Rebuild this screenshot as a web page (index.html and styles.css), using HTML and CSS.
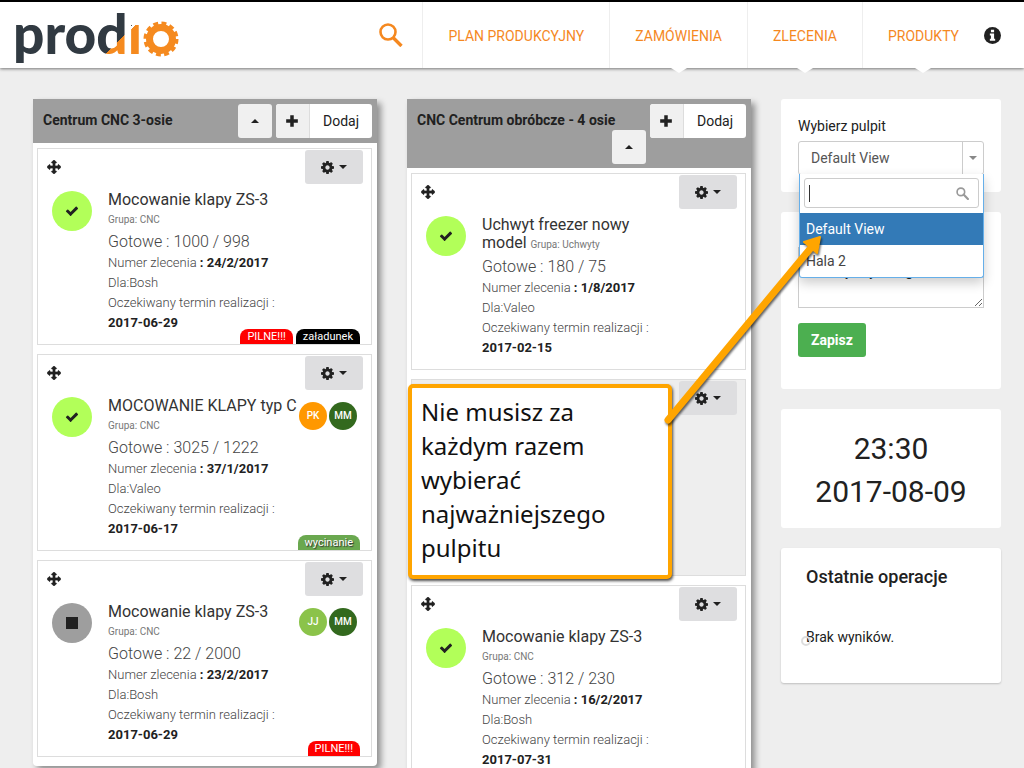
FILE: index.html
```html
<!DOCTYPE html>
<html lang="pl">
<head>
    <meta charset="UTF-8">
    <meta name="viewport" content="width=device-width, initial-scale=1.0">
    <title>Prodio - pulpit</title>
    <link rel="stylesheet" href="styles.css">
</head>
<body>
    <!-- Icons -->
    <svg class="sprite" aria-hidden="true">
        <symbol id="i-move" viewBox="0 0 1792 1792"><path stroke="currentColor" stroke-width="90" d="M1792 896q0 26-19 45l-256 256q-19 19-45 19t-45-19-19-45v-128h-384v384h128q26 0 45 19t19 45-19 45l-256 256q-19 19-45 19t-45-19l-256-256q-19-19-19-45t19-45 45-19h128v-384h-384v128q0 26-19 45t-45 19-45-19l-256-256q-19-19-19-45t19-45l256-256q19-19 45-19t45 19 19 45v128h384v-384h-128q-26 0-45-19t-19-45 19-45l256-256q19-19 45-19t45 19l256 256q19 19 19 45t-19 45-45 19h-128v384h384v-128q0-26 19-45t45-19 45 19l256 256q19 19 19 45z"/></symbol>
        <symbol id="i-cog" viewBox="128 128 1536 1536"><path d="M1152 896q0-106-75-181t-181-75-181 75-75 181 75 181 181 75 181-75 75-181zm512-109v222q0 12-8 23t-20 13l-185 28q-19 54-39 91 35 50 107 138 10 12 10 25t-9 23q-27 37-99 108t-94 71q-12 0-26-9l-138-108q-44 23-91 38-16 136-29 186-7 28-36 28h-222q-14 0-24.500-8.500t-11.500-21.500l-28-184q-49-16-90-37l-141 107q-10 9-25 9-14 0-25-11-126-114-165-168-7-10-7-23 0-12 8-23 15-21 51-66.500t54-70.500q-27-50-41-99l-183-27q-13-2-21-12.500t-8-23.500v-222q0-12 8-23t19-13l186-28q14-46 39-92-40-57-107-138-10-12-10-24 0-10 9-23 26-36 98.500-107.500t94.500-71.500q13 0 26 10l138 107q44-23 91-38 16-136 29-186 7-28 36-28h222q14 0 24.500 8.500t11.500 21.500l28 184q49 16 90 37l142-107q9-9 24-9 13 0 25 10 129 119 165 170 7 8 7 22 0 12-8 23-15 21-51 66.500t-54 70.500q26 50 41 98l183 28q13 2 21 12.500t8 23.500z"/></symbol>
        <symbol id="i-check" viewBox="0 0 1792 1792"><path d="M1671 566q0 40-28 68l-724 724-136 136q-28 28-68 28t-68-28l-136-136-362-362q-28-28-28-68t28-68l136-136q28-28 68-28t68 28l294 295 656-657q28-28 68-28t68 28l136 136q28 28 28 68z"/></symbol>
        <symbol id="i-stop" viewBox="0 0 14 14"><rect x="1" y="1" width="12" height="12"/></symbol>
        <symbol id="i-plus" viewBox="0 0 12 12"><path d="M4.500 1h3v3.500H11v3H7.500V11h-3V7.500H1v-3h3.500z"/></symbol>
        <symbol id="i-up" viewBox="0 0 8 4"><path d="M0 4l4-4 4 4z"/></symbol>
        <symbol id="i-down" viewBox="0 0 8 4"><path d="M0 0l4 4 4-4z"/></symbol>
        <symbol id="i-search" viewBox="0 0 24 24"><circle cx="9" cy="9" r="7" fill="none" stroke="currentColor" stroke-width="3"/><path d="M14 14l8 8" stroke="currentColor" stroke-width="4" stroke-linecap="round"/></symbol>
        <symbol id="i-search-thin" viewBox="0 0 24 24"><circle cx="9" cy="9" r="7.500" fill="none" stroke="currentColor" stroke-width="2.600"/><path d="M14 14.500l8.500 8.500" stroke="currentColor" stroke-width="3.400"/></symbol>
        <symbol id="i-info" viewBox="0 0 16 16"><circle cx="8" cy="8" r="8"/><path fill="#fff" d="M6.500 2.500h3V5h-3zM5.500 6h4v5h1v2h-5v-2h1V8h-1z"/></symbol>
    </svg>

    <header class="navbar">
        <a class="logo" href="#" aria-label="prodio">
            <svg width="166" height="54" viewBox="0 0 166 54">
                <defs>
                    <linearGradient id="d-fill" gradientUnits="userSpaceOnUse" x1="92" y1="22" x2="108" y2="38">
                        <stop offset="60%" stop-color="#313a42"/>
                        <stop offset="60%" stop-color="#f58a1f"/>
                    </linearGradient>
                    <linearGradient id="i-fill" gradientUnits="userSpaceOnUse" x1="116" y1="11" x2="123" y2="18">
                        <stop offset="30%" stop-color="#313a42"/>
                        <stop offset="30%" stop-color="#fff"/>
                        <stop offset="55%" stop-color="#fff"/>
                        <stop offset="55%" stop-color="#f58a1f"/>
                    </linearGradient>
                </defs>
                <text x="-1" y="42" class="logo-text">pro<tspan fill="url(#d-fill)">d</tspan><tspan fill="url(#i-fill)">ı</tspan></text>
                <circle cx="147" cy="27" r="11.500" fill="none" stroke="#f58a1f" stroke-width="7"/>
                <circle cx="147" cy="27" r="15.500" fill="none" stroke="#f58a1f" stroke-width="4" stroke-dasharray="4.800 3.316"/>
            </svg>
        </a>
        <a class="search" href="#" aria-label="Szukaj"><svg class="icon"><use href="#i-search-thin"/></svg></a>
        <nav class="menu">
            <a href="#">PLAN PRODUKCYJNY</a>
            <a href="#" class="has-sub">ZAMÓWIENIA</a>
            <a href="#" class="has-sub">ZLECENIA</a>
            <a href="#" class="has-sub">PRODUKTY</a>
        </nav>
        <a class="info-link" href="#" aria-label="Informacje"><svg class="icon"><use href="#i-info"/></svg></a>
    </header>

    <main class="board">
        <section class="column">
            <div class="column-head">
                <div class="column-title">
                    <h2>Centrum CNC 3-osie</h2>
                    <button class="btn-up" aria-label="Zwiń"><svg class="caret"><use href="#i-up"/></svg></button>
                </div>
                <button class="btn-add"><span class="plus"><svg class="icon"><use href="#i-plus"/></svg></span><span class="add-text">Dodaj</span></button>
            </div>
            <div class="column-body">
                <article class="card">
                    <div class="card-top">
                        <svg class="icon move"><use href="#i-move"/></svg>
                        <button class="btn-gear" aria-label="Opcje"><svg class="icon"><use href="#i-cog"/></svg><svg class="caret"><use href="#i-down"/></svg></button>
                    </div>
                    <div class="card-main">
                        <span class="status done"><svg class="icon"><use href="#i-check"/></svg></span>
                        <div class="details">
                            <h3>Mocowanie klapy ZS-3 <small>Grupa: CNC</small></h3>
                            <p class="ready">Gotowe : 1000 / 998</p>
                            <p>Numer zlecenia <b>: 24/2/2017</b></p>
                            <p>Dla:Bosh</p>
                            <p>Oczekiwany termin realizacji : <b>2017-06-29</b></p>
                        </div>
                        <div class="people"></div>
                    </div>
                    <div class="tags"><span class="tag red">PILNE!!!</span><span class="tag black">załadunek</span></div>
                </article>
                <article class="card">
                    <div class="card-top">
                        <svg class="icon move"><use href="#i-move"/></svg>
                        <button class="btn-gear" aria-label="Opcje"><svg class="icon"><use href="#i-cog"/></svg><svg class="caret"><use href="#i-down"/></svg></button>
                    </div>
                    <div class="card-main">
                        <span class="status done"><svg class="icon"><use href="#i-check"/></svg></span>
                        <div class="details">
                            <h3>MOCOWANIE KLAPY typ C <small>Grupa: CNC</small></h3>
                            <p class="ready">Gotowe : 3025 / 1222</p>
                            <p>Numer zlecenia <b>: 37/1/2017</b></p>
                            <p>Dla:Valeo</p>
                            <p>Oczekiwany termin realizacji : <b>2017-06-17</b></p>
                        </div>
                        <div class="people"><span class="avatar orange">PK</span><span class="avatar dark">MM</span></div>
                    </div>
                    <div class="tags"><span class="tag green">wycinanie</span></div>
                </article>
                <article class="card">
                    <div class="card-top">
                        <svg class="icon move"><use href="#i-move"/></svg>
                        <button class="btn-gear" aria-label="Opcje"><svg class="icon"><use href="#i-cog"/></svg><svg class="caret"><use href="#i-down"/></svg></button>
                    </div>
                    <div class="card-main">
                        <span class="status stopped"><svg class="icon"><use href="#i-stop"/></svg></span>
                        <div class="details">
                            <h3>Mocowanie klapy ZS-3 <small>Grupa: CNC</small></h3>
                            <p class="ready">Gotowe : 22 / 2000</p>
                            <p>Numer zlecenia <b>: 23/2/2017</b></p>
                            <p>Dla:Bosh</p>
                            <p>Oczekiwany termin realizacji : <b>2017-06-29</b></p>
                        </div>
                        <div class="people"><span class="avatar light">JJ</span><span class="avatar dark">MM</span></div>
                    </div>
                    <div class="tags"><span class="tag red">PILNE!!!</span></div>
                </article>
            </div>
        </section>

        <section class="column">
            <div class="column-head">
                <div class="column-title">
                    <h2>CNC Centrum obróbcze - 4 osie</h2>
                    <button class="btn-up" aria-label="Zwiń"><svg class="caret"><use href="#i-up"/></svg></button>
                </div>
                <button class="btn-add"><span class="plus"><svg class="icon"><use href="#i-plus"/></svg></span><span class="add-text">Dodaj</span></button>
            </div>
            <div class="column-body">
                <article class="card">
                    <div class="card-top">
                        <svg class="icon move"><use href="#i-move"/></svg>
                        <button class="btn-gear" aria-label="Opcje"><svg class="icon"><use href="#i-cog"/></svg><svg class="caret"><use href="#i-down"/></svg></button>
                    </div>
                    <div class="card-main">
                        <span class="status done"><svg class="icon"><use href="#i-check"/></svg></span>
                        <div class="details">
                            <h3>Uchwyt freezer nowy model <small>Grupa: Uchwyty</small></h3>
                            <p class="ready">Gotowe : 180 / 75</p>
                            <p>Numer zlecenia <b>: 1/8/2017</b></p>
                            <p>Dla:Valeo</p>
                            <p>Oczekiwany termin realizacji : <b>2017-02-15</b></p>
                        </div>
                        <div class="people"></div>
                    </div>
                </article>
                <article class="card inactive">
                    <div class="card-top">
                        <button class="btn-gear" aria-label="Opcje"><svg class="icon"><use href="#i-cog"/></svg><svg class="caret"><use href="#i-down"/></svg></button>
                    </div>
                </article>
                <article class="card">
                    <div class="card-top">
                        <svg class="icon move"><use href="#i-move"/></svg>
                        <button class="btn-gear" aria-label="Opcje"><svg class="icon"><use href="#i-cog"/></svg><svg class="caret"><use href="#i-down"/></svg></button>
                    </div>
                    <div class="card-main">
                        <span class="status done"><svg class="icon"><use href="#i-check"/></svg></span>
                        <div class="details">
                            <h3>Mocowanie klapy ZS-3 <small>Grupa: CNC</small></h3>
                            <p class="ready">Gotowe : 312 / 230</p>
                            <p>Numer zlecenia <b>: 16/2/2017</b></p>
                            <p>Dla:Bosh</p>
                            <p>Oczekiwany termin realizacji : <b>2017-07-31</b></p>
                        </div>
                        <div class="people"></div>
                    </div>
                </article>
            </div>
        </section>

        <aside class="sidebar">
            <div class="panel picker">
                <label for="view">Wybierz pulpit</label>
                <div class="select-box">
                    <select id="view">
                        <option>Default View</option>
                        <option>Hala 2</option>
                    </select>
                    <span class="select-arrow"><svg class="caret"><use href="#i-down"/></svg></span>
                    <div class="dropdown">
                        <div class="dropdown-search">
                            <input type="text" aria-label="Szukaj pulpitu">
                            <svg class="icon"><use href="#i-search"/></svg>
                        </div>
                        <ul>
                            <li class="active">Default View</li>
                            <li>Hala 2</li>
                        </ul>
                    </div>
                </div>
            </div>
            <div class="panel note">
                <textarea aria-label="Notatka">Zasoby czy uwagi,</textarea>
                <button class="btn-save">Zapisz</button>
            </div>
            <div class="panel clock">
                <div>23:30</div>
                <div>2017-08-09</div>
            </div>
            <div class="panel operations">
                <h2>Ostatnie operacje</h2>
                <p>Brak wyników.<span class="spinner"></span></p>
            </div>
        </aside>
    </main>

    <!-- Hint shown over the board -->
    <div class="hint">Nie musisz za każdym razem wybierać najważniejszego pulpitu</div>
    <svg class="hint-arrow" width="170" height="200" viewBox="0 0 170 200" aria-hidden="true">
        <path d="M9 187L151 16" stroke="#ffa500" stroke-width="7" stroke-linecap="round"/>
        <path d="M161 4L158 20L145 9z" fill="#ffa500" stroke="#ffa500" stroke-width="2" stroke-linejoin="round"/>
    </svg>
</body>
</html>
```
FILE: styles.css
```css
* {
    box-sizing: border-box;
}

body {
    margin: 0;
    height: 100vh;
    overflow: hidden;
    position: relative;
    background-color: #eee;
    color: #212121;
    font-family: Roboto, sans-serif;
    font-size: 14px;
}

h2, h3, p, ul {
    margin: 0;
    padding: 0;
}

button, input, select, textarea {
    font-family: inherit;
    font-size: 14px;
    color: inherit;
}

button {
    border: none;
    padding: 0;
    cursor: pointer;
}

.sprite {
    display: none;
}

.icon {
    width: 14px;
    height: 14px;
    fill: currentColor;
}

.caret {
    width: 8px;
    height: 4px;
    fill: currentColor;
}

/* Top bar */
.navbar {
    display: flex;
    align-items: center;
    height: 68px;
    padding: 0 23px 0 14px;
    border-top: 2px solid #000;
    background-color: #fff;
    box-shadow: 0 1px 3px rgba(0, 0, 0, 0.5);
}

.logo {
    display: flex;
    margin-top: 8px;
}

.logo svg {
    overflow: visible;
}

.logo-text {
    font-family: Lato, sans-serif;
    font-size: 55px;
    font-weight: 900;
    fill: #313a42;
}

.search {
    margin-left: auto;
    padding-right: 19px;
    color: #f5881f;
}

.search .icon {
    display: block;
    width: 24px;
    height: 24px;
}

.menu {
    display: flex;
    align-self: stretch;
}

.menu a {
    display: flex;
    align-items: center;
    position: relative;
    padding: 2px 25px 0;
    border-left: 1px solid #eee;
    color: #f5881f;
    text-decoration: none;
}

.menu .has-sub::after {
    content: "";
    position: absolute;
    left: 50%;
    bottom: -5px;
    margin-left: -8px;
    border: 8px solid transparent;
    border-top: 5px solid #fff;
    border-bottom: none;
}

.info-link {
    color: #212121;
}

.info-link .icon {
    display: block;
    width: 17px;
    height: 17px;
}

/* Board */
.board {
    display: grid;
    grid-template-columns: 1fr 1fr 220px;
    align-items: start;
    gap: 30px;
    padding: 31px 23px 0 33px;
}

.column {
    background-color: #fff;
    border-radius: 0 0 4px 4px;
    box-shadow: 4px 4px 6px rgba(0, 0, 0, 0.4);
}

.column-head {
    display: flex;
    align-items: flex-start;
    gap: 4px;
    min-height: 44px;
    padding: 5px 5px 4px 10px;
    background-color: #9e9e9e;
}

.column-title {
    flex: 1;
    display: flex;
    flex-wrap: wrap;
    align-items: flex-start;
}

.column-title h2 {
    padding-top: 6px;
    font-size: 14px;
    font-weight: bold;
    line-height: 20px;
}

.btn-up {
    width: 34px;
    height: 34px;
    margin-left: auto;
    border-radius: 3px;
    background-color: #f0f0f0;
}

.btn-up .caret {
    display: block;
    margin: 0 auto;
}

.btn-add {
    display: flex;
    height: 34px;
    border-radius: 3px;
    background-color: #fff;
    overflow: hidden;
}

.plus {
    display: flex;
    align-items: center;
    justify-content: center;
    width: 34px;
    height: 34px;
    border-right: 1px solid #ddd;
    background-color: #f0f0f0;
}

.add-text {
    padding: 0 13px;
    line-height: 34px;
}

.column-body {
    display: flex;
    flex-direction: column;
    gap: 9px;
    padding: 5px 5px 9px 4px;
}

.card {
    position: relative;
    min-height: 197px;
    padding: 1px 0 11px;
    border: 1px solid #ddd;
}

.card.inactive {
    background-color: #eee;
}

.card-top {
    display: flex;
    justify-content: space-between;
    align-items: center;
    padding: 0 8px 0 9px;
}

.btn-gear {
    display: flex;
    align-items: center;
    justify-content: center;
    gap: 5px;
    width: 58px;
    height: 34px;
    margin-left: auto;
    border-radius: 3px;
    background-color: #dedee0;
}

.btn-gear .icon {
    width: 13px;
    height: 13px;
}

.card-main {
    display: flex;
    padding: 7px 14px 0;
}

.status {
    display: flex;
    align-items: center;
    justify-content: center;
    width: 40px;
    height: 40px;
    border-radius: 50%;
}

.status.done {
    background-color: #b2ff59;
}

.status.stopped {
    background-color: #9e9e9e;
}

.details {
    flex: 1;
    padding-left: 16px;
    color: #444;
    font-size: 13px;
    font-weight: 300;
    line-height: 20px;
}

.details h3 {
    padding-bottom: 2px;
    color: #333;
    font-size: 16px;
    font-weight: normal;
    line-height: 18px;
}

.details small {
    font-size: 10px;
    color: #777;
    white-space: nowrap;
}

.details .ready {
    font-size: 16px;
    line-height: 22px;
}

.details b {
    display: inline-block;
    color: #212121;
    font-weight: bold;
}

.people {
    display: flex;
    gap: 2px;
    width: 58px;
    padding-top: 5px;
}

.avatar {
    width: 28px;
    height: 28px;
    border-radius: 50%;
    color: #fff;
    font-size: 10px;
    font-weight: 500;
    line-height: 28px;
    text-align: center;
}

.avatar.orange {
    background-color: #ff9800;
}

.avatar.dark {
    background-color: #33691e;
}

.avatar.light {
    background-color: #8bc34a;
}

.tags {
    position: absolute;
    right: 11px;
    bottom: 0;
    display: flex;
    gap: 3px;
}

.tag {
    padding: 0 7px;
    border-radius: 8px 8px 0 0;
    color: #fff;
    font-size: 11px;
    line-height: 15px;
}

.tag.red {
    background-color: #f00;
}

.tag.black {
    background-color: #000;
}

.tag.green {
    background-color: #6aa84f;
    text-shadow: 1px 1px 1px #333;
}

/* Sidebar */
.sidebar {
    display: flex;
    flex-direction: column;
    gap: 20px;
}

.panel {
    padding: 17px;
    border-radius: 3px;
    background-color: #fff;
}

.picker label {
    display: block;
    line-height: 20px;
    margin-bottom: 5px;
}

.select-box {
    position: relative;
    display: flex;
    height: 34px;
    border: 1px solid #ccc;
    border-radius: 3px;
}

.select-box select {
    flex: 1;
    padding: 0 12px;
    border: none;
    outline: none;
    background: none;
    appearance: none;
    color: #555;
}

.select-arrow {
    display: flex;
    align-items: center;
    justify-content: center;
    width: 21px;
    border-left: 1px solid #ccc;
    color: #888;
}

.dropdown {
    position: absolute;
    top: 32px;
    left: 0;
    right: -1px;
    z-index: 2;
    border: 1px solid #66afe9;
    border-top: none;
    border-radius: 0 0 3px 3px;
    background-color: #fff;
    box-shadow: 0 5px 12px rgba(0, 0, 0, 0.2);
}

.dropdown-search {
    display: flex;
    align-items: center;
    height: 30px;
    margin: 4px 4px 5px;
    padding: 0 9px 0 4px;
    border: 1px solid #ccc;
    border-radius: 3px;
    color: #999;
}

/* the left border is the text cursor */
.dropdown-search input {
    flex: 1;
    min-width: 0;
    height: 17px;
    padding: 0;
    border: none;
    border-left: 1px solid #333;
    outline: none;
    color: #333;
}

.dropdown-search .icon {
    width: 13px;
    height: 13px;
}

.dropdown ul {
    list-style: none;
}

.dropdown li {
    padding: 0 6px;
    color: #444;
    line-height: 32px;
}

.dropdown li.active {
    background-color: #337ab7;
    color: #fff;
}

.note {
    padding: 35px 17px 32px;
}

.note textarea {
    display: block;
    width: 100%;
    height: 61px;
    padding: 15px 7px;
    border: 1px solid #ccc;
}

.btn-save {
    height: 34px;
    margin-top: 15px;
    padding: 0 13px;
    border-radius: 3px;
    background-color: #4caf50;
    color: #fff;
    font-weight: bold;
}

.clock {
    padding: 18px 17px 15px;
    font-size: 30px;
    line-height: 43px;
    text-align: center;
}

.operations {
    padding: 17px 25px 36px;
    box-shadow: 0 1px 2px rgba(0, 0, 0, 0.2);
}

.operations h2 {
    font-size: 18px;
    font-weight: 500;
    line-height: 24px;
}

.operations p {
    position: relative;
    margin-top: 38px;
    line-height: 20px;
}

.spinner {
    position: absolute;
    left: -5px;
    top: 9px;
    width: 10px;
    height: 10px;
    border: 2px solid #ddd;
    border-radius: 50%;
}

/* Hint */
.hint {
    position: absolute;
    top: 384px;
    left: 408px;
    z-index: 3;
    width: 264px;
    padding: 7px 40px 10px 9px;
    border: 4px solid #ffa500;
    border-radius: 5px;
    background-color: #fff;
    box-shadow: 1px 2px 3px rgba(0, 0, 0, 0.7);
    color: #111;
    font-family: "Noto Sans", sans-serif;
    font-size: 24px;
    line-height: 34px;
}

.hint-arrow {
    position: absolute;
    top: 233px;
    left: 659px;
    z-index: 4;
    filter: drop-shadow(1px 2px 1px rgba(0, 0, 0, 0.6));
}
```
